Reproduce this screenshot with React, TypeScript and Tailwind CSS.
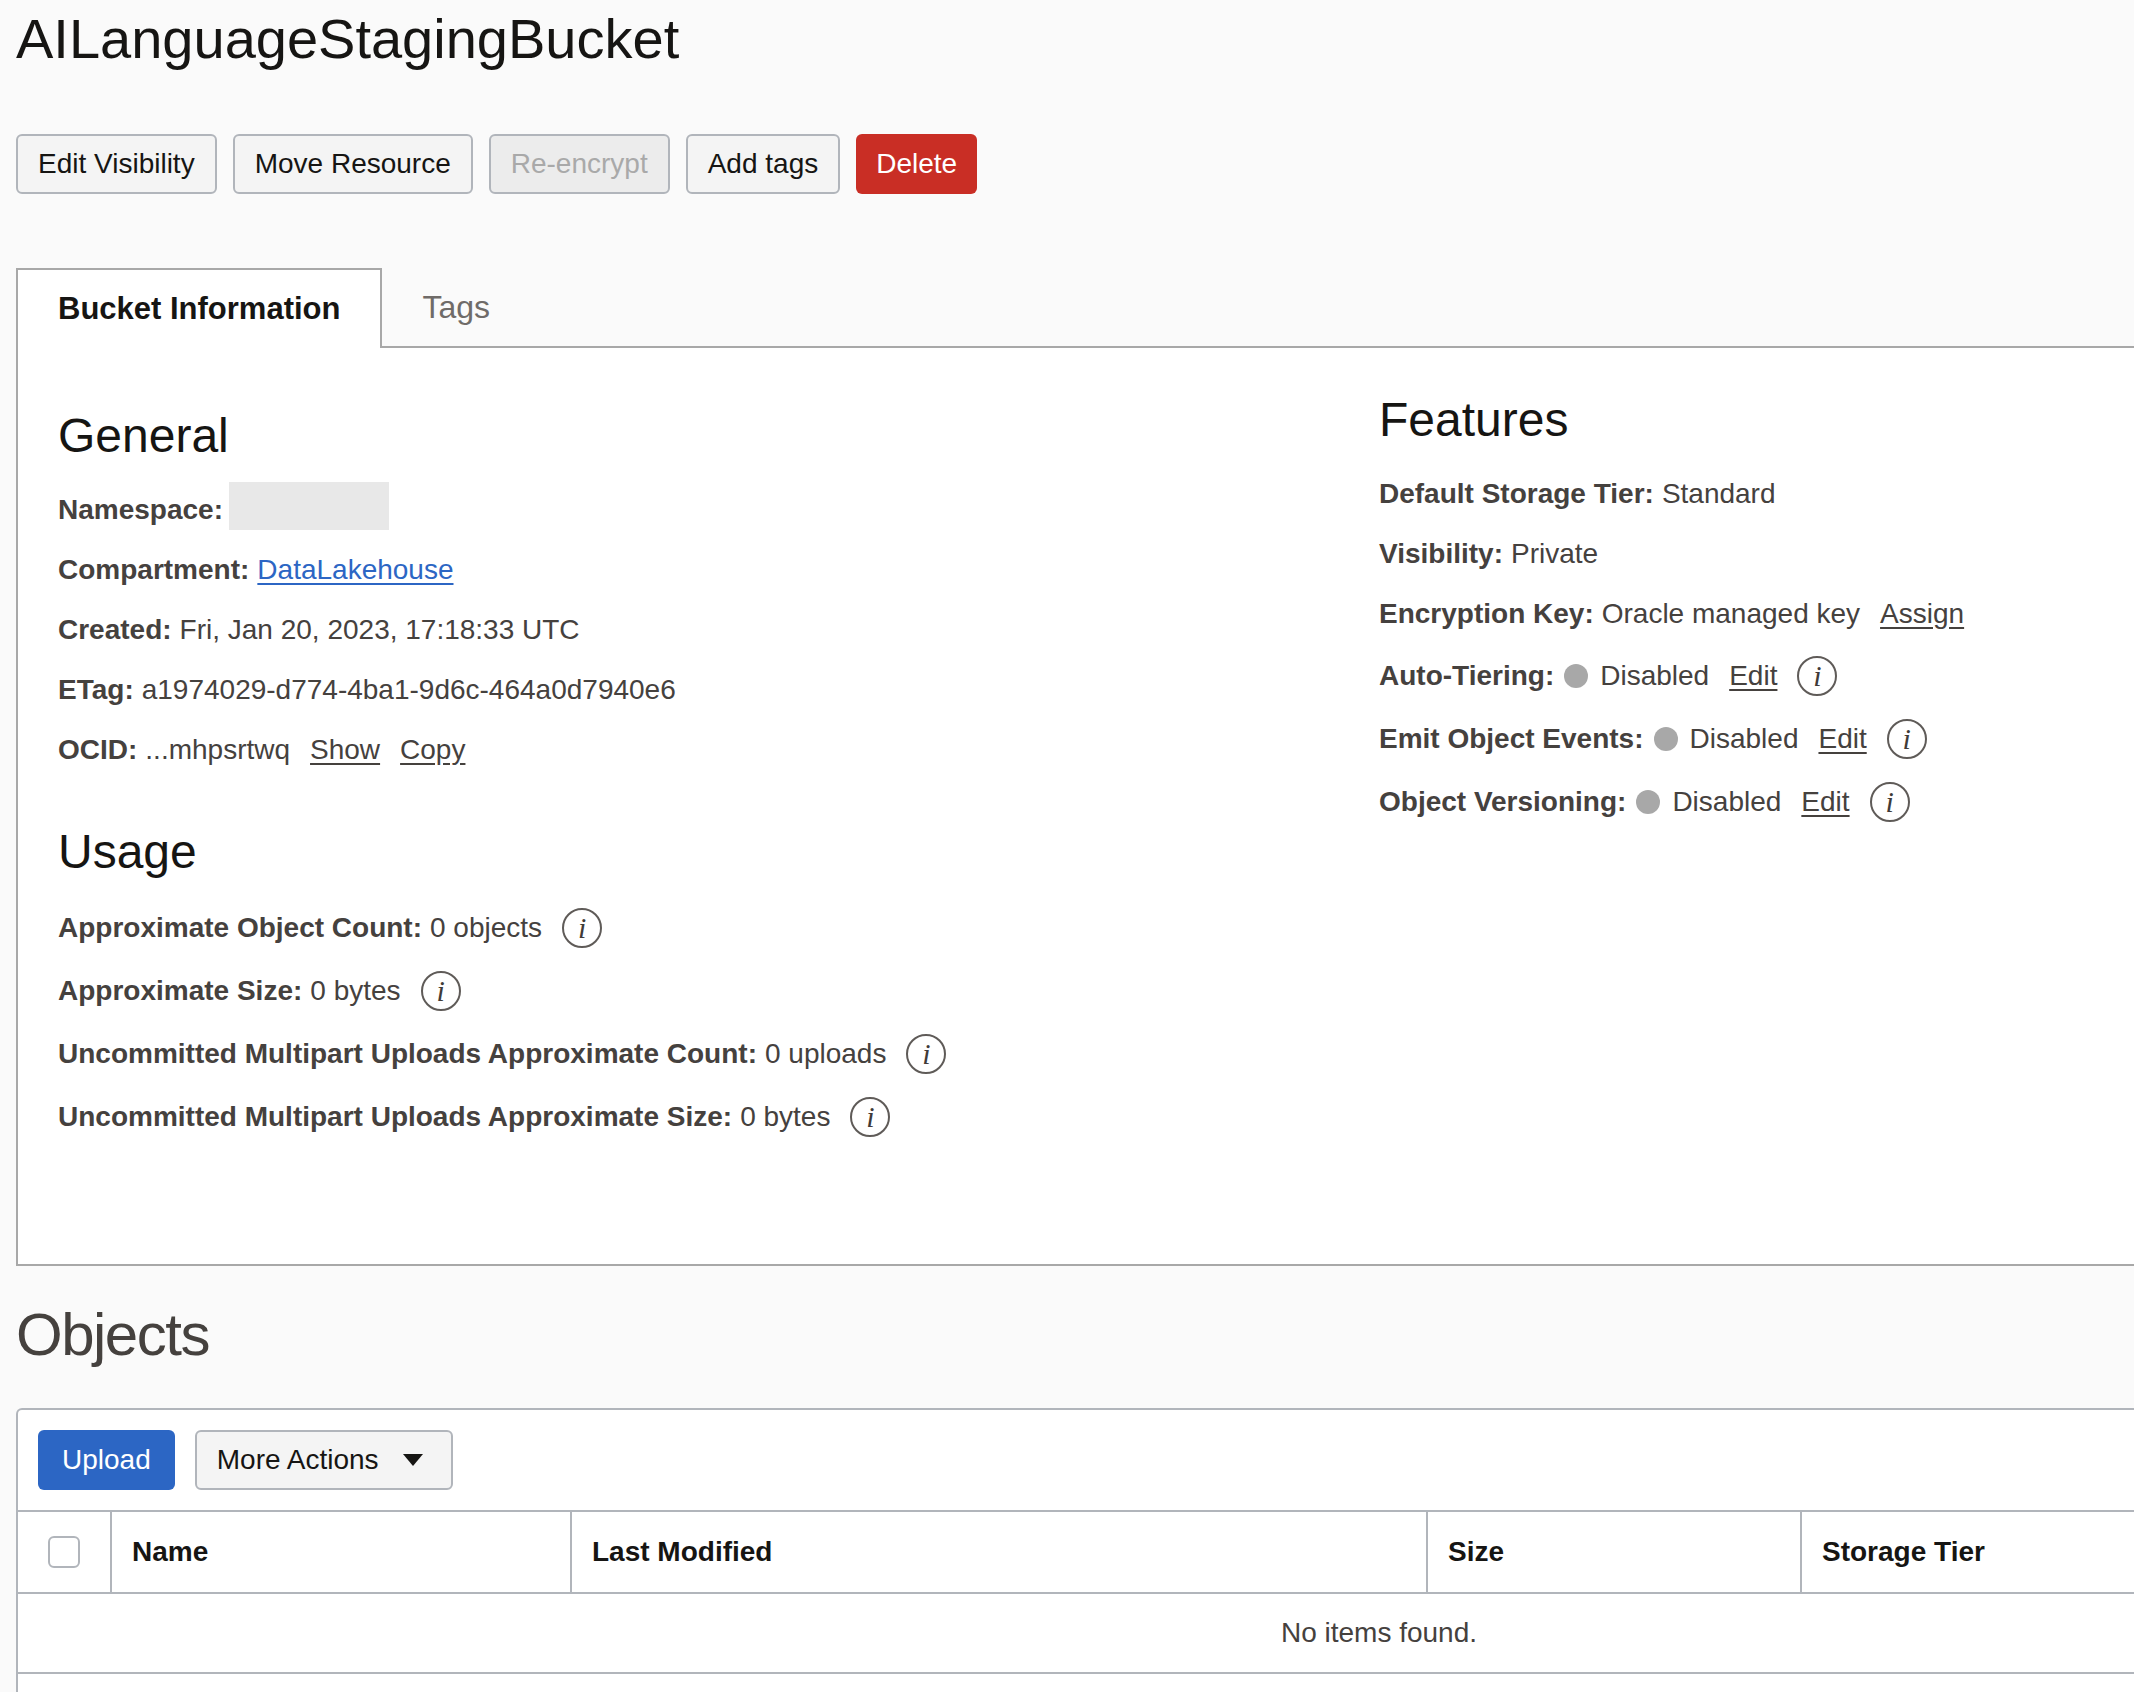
import React from "react";

const Info = () => (
  <span className="ml-5 flex h-10 w-10 shrink-0 items-center justify-center rounded-full border-2 border-[#5f5b58] font-['Liberation_Serif'] text-3xl text-[#3f3b38] italic">
    i
  </span>
);

const Dot = () => <span className="mr-3 ml-0.5 h-6 w-6 shrink-0 rounded-full bg-[#a8a8a8]" />;

const Label = ({ children }: { children: React.ReactNode }) => (
  <span className="mr-2 font-bold text-[#45413e]">{children}</span>
);

const Row = ({ children }: { children: React.ReactNode }) => (
  <div className="flex h-15 items-center whitespace-pre">{children}</div>
);

const InfoRow = ({ children }: { children: React.ReactNode }) => (
  <div className="flex h-[63px] items-center whitespace-pre">{children}</div>
);

const A = ({ children, className = "ml-5" }: { children: React.ReactNode; className?: string }) => (
  <span className={`underline underline-offset-4 ${className}`}>{children}</span>
);

const Heading = ({ children }: { children: React.ReactNode }) => (
  <h2 className="mb-5 h-12 text-5xl leading-12 text-[#161513]">{children}</h2>
);

const Btn = ({ children, className = "" }: { children: React.ReactNode; className?: string }) => (
  <button className={`flex h-15 items-center rounded-md border-2 border-[#b1b5bb] bg-[#f4f4f4] pl-5 text-[#161513] ${className || "pr-5"}`}>
    {children}
  </button>
);

const HeadCell = ({ children }: { children?: React.ReactNode }) => (
  <div className="flex items-center border-r-2 border-[#b1b5bb] px-5 font-bold text-[#161513]">{children}</div>
);

export default function App() {
  return (
    <div className="h-[1692px] w-full overflow-hidden bg-[#fafafa] font-['Liberation_Sans'] text-[28px] text-[#45413e]">
      <div className="w-[2742px] pl-4">
        <h1 className="mb-1.5 h-32 pt-1 text-[56px] leading-[70px] text-[#161513]">AILanguageStagingBucket</h1>
        <div className="flex gap-4">
          <Btn>Edit Visibility</Btn>
          <Btn>Move Resource</Btn>
          <button className="flex h-15 items-center rounded-md border-2 border-[#b1b5bb] bg-[#ececec] px-5 text-[#a9a9a9]">Re-encrypt</button>
          <Btn>Add tags</Btn>
          <button className="flex h-15 items-center rounded-md bg-[#c92e25] px-5 text-white">Delete</button>
        </div>

        <div className="mt-[74px] flex h-20">
          <div className="relative z-10 flex h-20 items-center border-x-2 border-t-2 border-[#a8a8a8] bg-white px-10 text-[31px] font-bold text-[#161513]">
            Bucket Information
          </div>
          <div className="flex flex-1 items-center border-b-2 border-[#a8a8a8] px-10 text-[32px] text-[#6f6b68]">Tags</div>
        </div>

        <div className="grid grid-cols-2 border-x-2 border-b-2 border-[#a8a8a8] bg-white px-10 pt-12 pb-29">
          <div className="pt-4">
            <Heading>General</Heading>
            <Row>
              <Label>Namespace:</Label>
              <span className="mb-2 -ml-0.5 h-12 w-40 bg-[#e8e8e8]" />
            </Row>
            <Row>
              <Label>Compartment:</Label>
              <span className="text-[#2c66c4] underline underline-offset-4">DataLakehouse</span>
            </Row>
            <Row>
              <Label>Created:</Label>Fri, Jan 20, 2023, 17:18:33 UTC
            </Row>
            <Row>
              <Label>ETag:</Label>a1974029-d774-4ba1-9d6c-464a0d7940e6
            </Row>
            <Row>
              <Label>OCID:</Label>...mhpsrtwq<A>Show</A><A>Copy</A>
            </Row>
            <div className="h-12" />
            <Heading>Usage</Heading>
            <InfoRow>
              <Label>Approximate Object Count:</Label>0 objects<Info />
            </InfoRow>
            <InfoRow>
              <Label>Approximate Size:</Label>0 bytes<Info />
            </InfoRow>
            <InfoRow>
              <Label>Uncommitted Multipart Uploads Approximate Count:</Label>0 uploads<Info />
            </InfoRow>
            <InfoRow>
              <Label>Uncommitted Multipart Uploads Approximate Size:</Label>0 bytes<Info />
            </InfoRow>
          </div>
          <div>
            <Heading>Features</Heading>
            <Row>
              <Label>Default Storage Tier:</Label>Standard
            </Row>
            <Row>
              <Label>Visibility:</Label>Private
            </Row>
            <Row>
              <Label>Encryption Key:</Label>Oracle managed key<A>Assign</A>
            </Row>
            <InfoRow>
              <Label>Auto-Tiering:</Label>
              <Dot />Disabled<A>Edit</A><Info />
            </InfoRow>
            <InfoRow>
              <Label>Emit Object Events:</Label>
              <Dot />Disabled<A>Edit</A><Info />
            </InfoRow>
            <InfoRow>
              <Label>Object Versioning:</Label>
              <Dot />Disabled<A>Edit</A><Info />
            </InfoRow>
          </div>
        </div>

        <h2 className="flex h-[142px] items-center pb-1 text-6xl tracking-tight text-[#45413e]">Objects</h2>

        <div className="h-96 rounded-t-md border-x-2 border-t-2 border-[#b1b5bb] bg-white">
          <div className="flex gap-5 p-5">
            <button className="flex h-15 items-center rounded-md bg-[#2c66c4] px-6 text-white">Upload</button>
            <Btn className="pr-7">
              More Actions
              <svg viewBox="0 0 20 12" className="ml-6 h-3 w-5 fill-[#161513]">
                <path d="M0 0h20L10 12z" />
              </svg>
            </Btn>
          </div>
          <div className="grid h-21 grid-cols-[94px_460px_856px_374px_1fr] border-y-2 border-[#b1b5bb]">
            <div className="flex items-center justify-center border-r-2 border-[#b1b5bb]">
              <span className="h-8 w-8 rounded-md border-2 border-[#b1b5bb] bg-white" />
            </div>
            <HeadCell>Name</HeadCell>
            <HeadCell>Last Modified</HeadCell>
            <HeadCell>Size</HeadCell>
            <div className="flex items-center px-5 font-bold text-[#161513]">Storage Tier</div>
          </div>
          <div className="flex h-20 items-center justify-center border-b-2 border-[#b1b5bb]">No items found.</div>
        </div>
      </div>
    </div>
  );
}
